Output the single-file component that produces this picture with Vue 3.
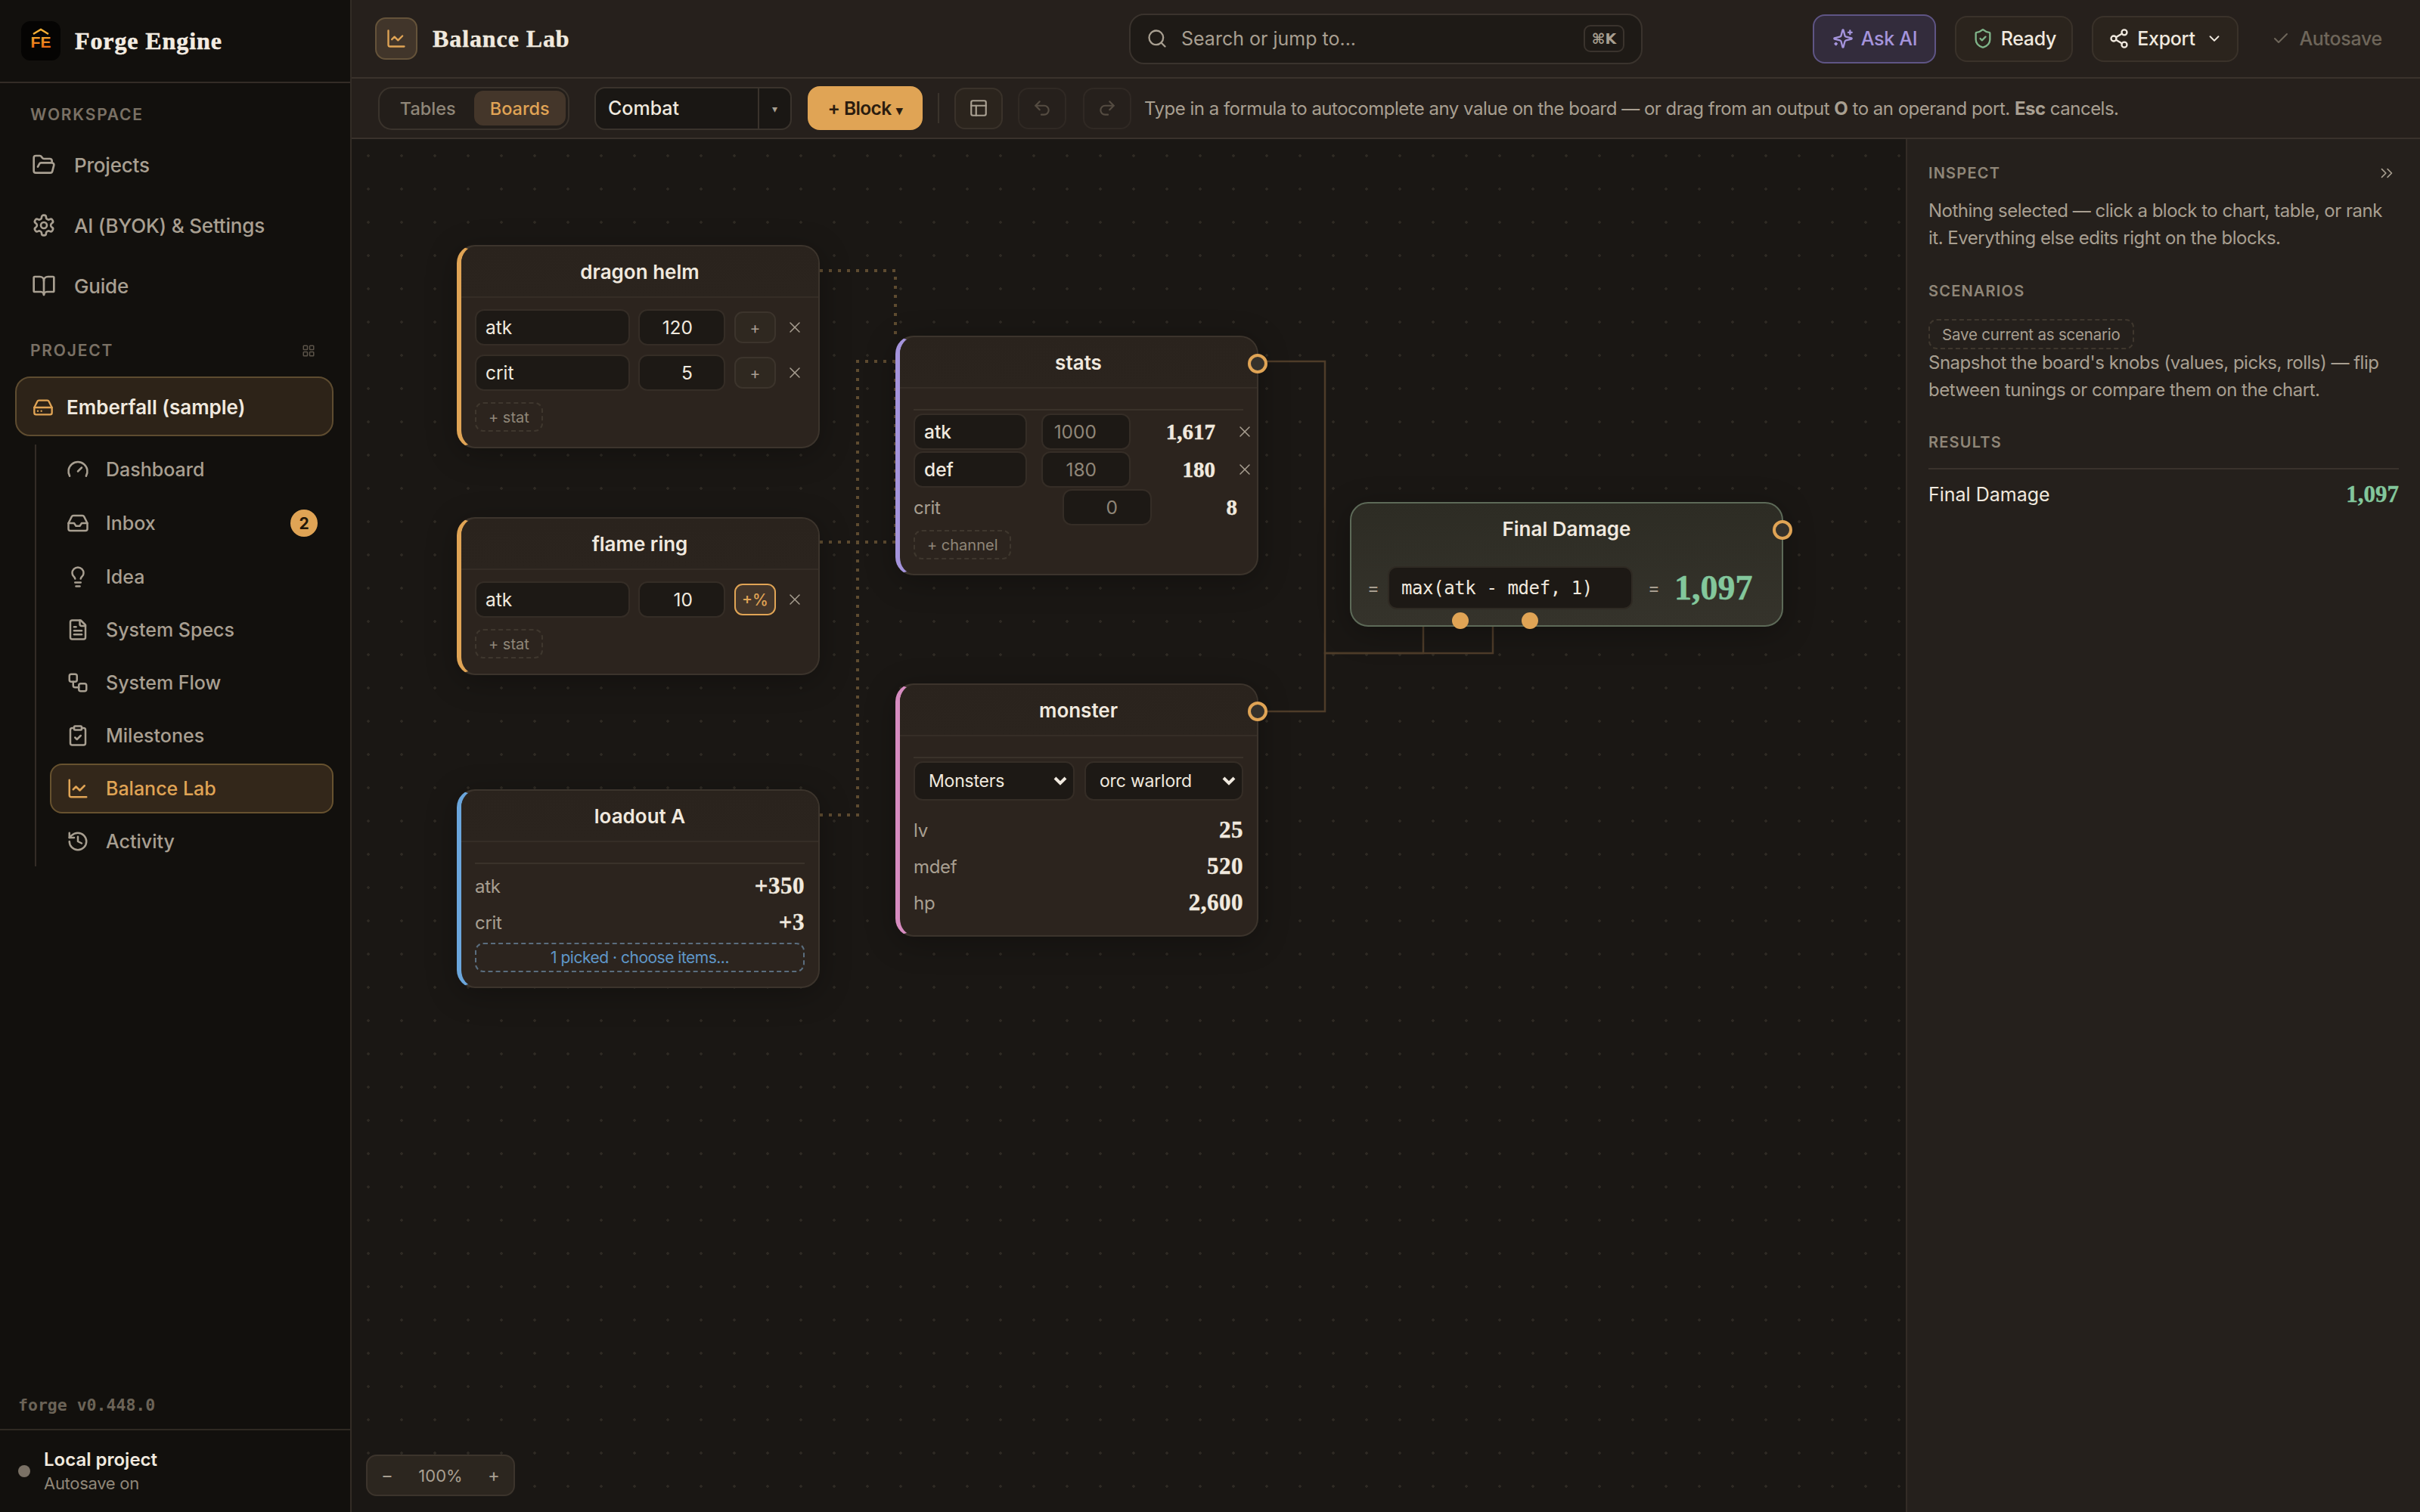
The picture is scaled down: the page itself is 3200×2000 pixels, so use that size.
<script setup>
import { h } from 'vue'

const paths = {
  folder: ['m6 14 1.5-2.9A2 2 0 0 1 9.24 10H20a2 2 0 0 1 1.94 2.5l-1.54 6a2 2 0 0 1-1.95 1.5H4a2 2 0 0 1-2-2V5a2 2 0 0 1 2-2h3.9a2 2 0 0 1 1.69.9l.81 1.2a2 2 0 0 0 1.67.9H18a2 2 0 0 1 2 2v2'],
  settings: ['M12.22 2h-.44a2 2 0 0 0-2 2v.18a2 2 0 0 1-1 1.73l-.43.25a2 2 0 0 1-2 0l-.15-.08a2 2 0 0 0-2.73.73l-.22.38a2 2 0 0 0 .73 2.73l.15.1a2 2 0 0 1 1 1.72v.51a2 2 0 0 1-1 1.74l-.15.09a2 2 0 0 0-.73 2.73l.22.38a2 2 0 0 0 2.73.73l.15-.08a2 2 0 0 1 2 0l.43.25a2 2 0 0 1 1 1.73V20a2 2 0 0 0 2 2h.44a2 2 0 0 0 2-2v-.18a2 2 0 0 1 1-1.73l.43-.25a2 2 0 0 1 2 0l.15.08a2 2 0 0 0 2.73-.73l.22-.39a2 2 0 0 0-.73-2.73l-.15-.08a2 2 0 0 1-1-1.74v-.5a2 2 0 0 1 1-1.74l.15-.09a2 2 0 0 0 .73-2.73l-.22-.38a2 2 0 0 0-2.73-.73l-.15.08a2 2 0 0 1-2 0l-.43-.25a2 2 0 0 1-1-1.73V4a2 2 0 0 0-2-2z', 'M15 12a3 3 0 1 1-6 0 3 3 0 0 1 6 0z'],
  book: ['M12 7v14', 'M3 18a1 1 0 0 1-1-1V4a1 1 0 0 1 1-1h5a4 4 0 0 1 4 4 4 4 0 0 1 4-4h5a1 1 0 0 1 1 1v13a1 1 0 0 1-1 1h-6a3 3 0 0 0-3 3 3 3 0 0 0-3-3z'],
  grid: ['M4 3h5a1 1 0 0 1 1 1v5a1 1 0 0 1-1 1H4a1 1 0 0 1-1-1V4a1 1 0 0 1 1-1z', 'M15 3h5a1 1 0 0 1 1 1v5a1 1 0 0 1-1 1h-5a1 1 0 0 1-1-1V4a1 1 0 0 1 1-1z', 'M4 14h5a1 1 0 0 1 1 1v5a1 1 0 0 1-1 1H4a1 1 0 0 1-1-1v-5a1 1 0 0 1 1-1z', 'M15 14h5a1 1 0 0 1 1 1v5a1 1 0 0 1-1 1h-5a1 1 0 0 1-1-1v-5a1 1 0 0 1 1-1z'],
  drive: ['M22 12H2', 'M5.45 5.11 2 12v6a2 2 0 0 0 2 2h16a2 2 0 0 0 2-2v-6l-3.45-6.89A2 2 0 0 0 16.76 4H7.24a2 2 0 0 0-1.79 1.11z', 'M6 16h.01', 'M10 16h.01'],
  gauge: ['m12 14 4-4', 'M3.34 19a10 10 0 1 1 17.32 0'],
  inbox: ['M22 12h-6l-2 3h-4l-2-3H2', 'M5.45 5.11 2 12v6a2 2 0 0 0 2 2h16a2 2 0 0 0 2-2v-6l-3.45-6.89A2 2 0 0 0 16.76 4H7.24a2 2 0 0 0-1.79 1.11z'],
  bulb: ['M15 14c.2-1 .7-1.7 1.5-2.5 1-.9 1.5-2.2 1.5-3.5A6 6 0 0 0 6 8c0 1 .2 2.2 1.5 3.5.7.7 1.3 1.5 1.5 2.5', 'M9 18h6', 'M10 22h4'],
  file: ['M15 2H6a2 2 0 0 0-2 2v16a2 2 0 0 0 2 2h12a2 2 0 0 0 2-2V7Z', 'M14 2v4a2 2 0 0 0 2 2h4', 'M10 9H8', 'M16 13H8', 'M16 17H8'],
  flow: ['M5 3h4a2 2 0 0 1 2 2v4a2 2 0 0 1-2 2H5a2 2 0 0 1-2-2V5a2 2 0 0 1 2-2z', 'M7 11v4a2 2 0 0 0 2 2h4', 'M15 13h4a2 2 0 0 1 2 2v4a2 2 0 0 1-2 2h-4a2 2 0 0 1-2-2v-4a2 2 0 0 1 2-2z'],
  clipboard: ['M9 2h6a1 1 0 0 1 1 1v2a1 1 0 0 1-1 1H9a1 1 0 0 1-1-1V3a1 1 0 0 1 1-1z', 'M16 4h2a2 2 0 0 1 2 2v14a2 2 0 0 1-2 2H6a2 2 0 0 1-2-2V6a2 2 0 0 1 2-2h2', 'm9 14 2 2 4-4'],
  chart: ['M3 3v16a2 2 0 0 0 2 2h16', 'm19 9-5 5-4-4-3 3'],
  history: ['M3 12a9 9 0 1 0 9-9 9.75 9.75 0 0 0-6.74 2.74L3 8', 'M3 3v5h5', 'M12 7v5l4 2'],
  search: ['M19 11a8 8 0 1 1-16 0 8 8 0 0 1 16 0z', 'm21 21-4.3-4.3'],
  sparkles: ['M9.937 15.5A2 2 0 0 0 8.5 14.063l-6.135-1.582a.5.5 0 0 1 0-.962L8.5 9.936A2 2 0 0 0 9.937 8.5l1.582-6.135a.5.5 0 0 1 .963 0L14.063 8.5A2 2 0 0 0 15.5 9.937l6.135 1.581a.5.5 0 0 1 0 .964L15.5 14.063a2 2 0 0 0-1.437 1.437l-1.582 6.135a.5.5 0 0 1-.963 0z', 'M20 3v4', 'M22 5h-4', 'M4 17v2', 'M5 18H3'],
  shield: ['M20 13c0 5-3.5 7.5-7.66 8.95a1 1 0 0 1-.67-.01C7.5 20.5 4 18 4 13V6a1 1 0 0 1 1-1c2 0 4.5-1.2 6.24-2.72a1.17 1.17 0 0 1 1.52 0C14.51 3.81 17 5 19 5a1 1 0 0 1 1 1z', 'm9 12 2 2 4-4'],
  share: ['M21 5a3 3 0 1 1-6 0 3 3 0 0 1 6 0z', 'M9 12a3 3 0 1 1-6 0 3 3 0 0 1 6 0z', 'M21 19a3 3 0 1 1-6 0 3 3 0 0 1 6 0z', 'm8.59 13.51 6.83 3.98', 'm15.41 6.51-6.82 3.98'],
  down: ['m6 9 6 6 6-6'],
  check: ['M20 6 9 17l-5-5'],
  panels: ['M5 3h14a2 2 0 0 1 2 2v14a2 2 0 0 1-2 2H5a2 2 0 0 1-2-2V5a2 2 0 0 1 2-2z', 'M3 9h18', 'M9 21V9'],
  undo: ['M9 14 4 9l5-5', 'M4 9h10.5a5.5 5.5 0 0 1 0 11H11'],
  redo: ['m15 14 5-5-5-5', 'M20 9H9.5a5.5 5.5 0 0 0 0 11H13'],
  x: ['M18 6 6 18', 'm6 6 12 12'],
  chevrons: ['m6 17 5-5-5-5', 'm13 17 5-5-5-5'],
}

const Icon = (props) =>
  h('svg', { viewBox: '0 0 24 24', fill: 'none', stroke: 'currentColor', 'stroke-width': props.sw || 2, 'stroke-linecap': 'round', 'stroke-linejoin': 'round' },
    paths[props.name].map((d) => h('path', { d })))
Icon.props = ['name', 'sw']

const workspace = [
  { label: 'Projects', icon: 'folder' },
  { label: 'AI (BYOK) & Settings', icon: 'settings' },
  { label: 'Guide', icon: 'book' },
]

const projectNav = [
  { label: 'Dashboard', icon: 'gauge' },
  { label: 'Inbox', icon: 'inbox', badge: 2 },
  { label: 'Idea', icon: 'bulb' },
  { label: 'System Specs', icon: 'file' },
  { label: 'System Flow', icon: 'flow' },
  { label: 'Milestones', icon: 'clipboard' },
  { label: 'Balance Lab', icon: 'chart', active: true },
  { label: 'Activity', icon: 'history' },
]
</script>

<template>
  <div class="app">
    <aside class="sidebar">
      <div class="brand">
        <div class="logo">
          <svg viewBox="0 0 52 52">
            <defs>
              <linearGradient id="fe" x1="0" y1="0" x2="0" y2="1">
                <stop offset="0" stop-color="#f7b733" />
                <stop offset="1" stop-color="#e8590c" />
              </linearGradient>
            </defs>
            <path d="M16 17 26 11l10 6" fill="none" stroke="#f5b035" stroke-width="2.4" />
            <text x="26" y="35" text-anchor="middle" class="logo-text" fill="url(#fe)">FE</text>
          </svg>
        </div>
        <span class="brand-name">Forge Engine</span>
      </div>

      <div class="nav-wrap">
        <div class="nav-label">WORKSPACE</div>
        <a v-for="item in workspace" :key="item.label" class="nav-item">
          <Icon :name="item.icon" class="nav-icon" />
          <span>{{ item.label }}</span>
        </a>

        <div class="nav-label project-label">
          <span>PROJECT</span>
          <Icon name="grid" class="grid-icon" />
        </div>
        <div class="project-btn">
          <Icon name="drive" class="project-icon" />
          <span>Emberfall (sample)</span>
        </div>

        <div class="sub-list">
          <a v-for="item in projectNav" :key="item.label" class="sub-item"
            :class="{ active: item.active, tall: item.badge }">
            <Icon :name="item.icon" class="sub-icon" />
            <span>{{ item.label }}</span>
            <span v-if="item.badge" class="badge">{{ item.badge }}</span>
          </a>
        </div>
      </div>

      <div class="version">forge v0.448.0</div>
      <div class="side-foot">
        <span class="foot-dot"></span>
        <div>
          <div class="foot-title">Local project</div>
          <div class="foot-sub">Autosave on</div>
        </div>
      </div>
    </aside>

    <main class="main">
      <header class="topbar">
        <div class="page-title">
          <div class="page-icon"><Icon name="chart" /></div>
          <h1>Balance Lab</h1>
        </div>
        <div class="search">
          <Icon name="search" class="search-icon" />
          <span class="search-text">Search or jump to...</span>
          <kbd>⌘K</kbd>
        </div>
        <div class="top-actions">
          <button class="top-btn ai"><Icon name="sparkles" />Ask AI</button>
          <button class="top-btn ready"><Icon name="shield" class="green" />Ready</button>
          <button class="top-btn export"><Icon name="share" />Export<Icon name="down" class="small" /></button>
          <button class="autosave"><Icon name="check" />Autosave</button>
        </div>
      </header>

      <div class="toolbar">
        <div class="segment">
          <button>Tables</button>
          <button class="on">Boards</button>
        </div>
        <div class="sheet-select">
          <span class="sheet-name">Combat</span>
          <span class="sheet-caret">▾</span>
        </div>
        <button class="add-block">+ Block <span class="tiny">▾</span></button>
        <span class="tool-sep"></span>
        <button class="tool-btn lit"><Icon name="panels" /></button>
        <button class="tool-btn off"><Icon name="undo" /></button>
        <button class="tool-btn off"><Icon name="redo" /></button>
        <p class="hint">Type in a formula to autocomplete any value on the board — or drag from an output <b>O</b> to an operand port. <b>Esc</b> cancels.</p>
      </div>

      <div class="work">
        <section class="canvas">
          <svg class="wires" viewBox="465 184 2055 1816">
            <g class="dotted">
              <path d="M1084 358H1184V444" />
              <path d="M1084 717H1184V478" />
              <path d="M1084 1078H1134V478H1184" />
            </g>
            <g class="solid">
              <path d="M1664 478H1752V864H1882V829" />
              <path d="M1664 941H1752V864H1974V829" />
            </g>
          </svg>

          <div class="node amber helm">
            <div class="node-head">dragon helm</div>
            <div class="node-body">
              <div class="stat-row">
                <input class="fld name" value="atk" />
                <input class="fld num" value="120" />
                <button class="mode">+</button>
                <Icon name="x" class="del" sw="1.5" />
              </div>
              <div class="stat-row">
                <input class="fld name" value="crit" />
                <input class="fld num" value="5" />
                <button class="mode">+</button>
                <Icon name="x" class="del" sw="1.5" />
              </div>
              <button class="dash-btn">+ stat</button>
            </div>
          </div>

          <div class="node amber ring">
            <div class="node-head">flame ring</div>
            <div class="node-body">
              <div class="stat-row">
                <input class="fld name" value="atk" />
                <input class="fld num" value="10" />
                <button class="mode pct">+%</button>
                <Icon name="x" class="del" sw="1.5" />
              </div>
              <button class="dash-btn">+ stat</button>
            </div>
          </div>

          <div class="node blue loadout">
            <div class="node-head">loadout A</div>
            <div class="node-body ruled">
              <div class="rule"></div>
              <div class="read"><span>atk</span><b>+350</b></div>
              <div class="read"><span>crit</span><b>+3</b></div>
              <button class="pick">1 picked · choose items...</button>
            </div>
          </div>

          <div class="node violet stats">
            <div class="node-head">stats</div>
            <span class="port out"></span>
            <div class="node-body ruled">
              <div class="rule"></div>
              <div class="chan">
                <input class="fld chan-name" value="atk" />
                <input class="fld num base" value="1000" />
                <b class="chan-val">1,617</b>
                <Icon name="x" class="del chan-del" sw="1.5" />
              </div>
              <div class="chan">
                <input class="fld chan-name" value="def" />
                <input class="fld num base" value="180" />
                <b class="chan-val">180</b>
                <Icon name="x" class="del chan-del" sw="1.5" />
              </div>
              <div class="chan plain">
                <span class="chan-label">crit</span>
                <input class="fld num base" value="0" />
                <b class="chan-val last">8</b>
              </div>
              <button class="dash-btn chan-add">+ channel</button>
            </div>
          </div>

          <div class="node pink monster">
            <div class="node-head">monster</div>
            <span class="port out"></span>
            <div class="node-body ruled">
              <div class="rule"></div>
              <div class="selects">
                <select class="pick-a"><option>Monsters</option></select>
                <select class="pick-b"><option>orc warlord</option></select>
              </div>
              <div class="reads">
                <div class="read"><span>lv</span><b>25</b></div>
                <div class="read"><span>mdef</span><b>520</b></div>
                <div class="read"><span>hp</span><b>2,600</b></div>
              </div>
            </div>
          </div>

          <div class="node result">
            <div class="node-head">Final Damage</div>
            <span class="port out"></span>
            <div class="formula-row">
              <span class="eq">=</span>
              <input class="formula" value="max(atk - mdef, 1)" />
              <span class="eq">=</span>
              <b class="result-val">1,097</b>
            </div>
            <span class="port operand first"></span>
            <span class="port operand second"></span>
          </div>

          <div class="zoombar">
            <button>−</button>
            <span>100%</span>
            <button>+</button>
          </div>
        </section>

        <aside class="inspector">
          <div class="ins-head">
            <h3>INSPECT</h3>
            <Icon name="chevrons" class="collapse" sw="1.5" />
          </div>
          <p>Nothing selected — click a block to chart, table, or rank it. Everything else edits right on the blocks.</p>
          <h3 class="sec">SCENARIOS</h3>
          <button class="save-btn">Save current as scenario</button>
          <p>Snapshot the board's knobs (values, picks, rolls) — flip between tunings or compare them on the chart.</p>
          <h3 class="sec results">RESULTS</h3>
          <div class="result-row">
            <span>Final Damage</span>
            <b>1,097</b>
          </div>
        </aside>
      </div>
    </main>
  </div>
</template>

<style>
html, body {
  margin: 0;
  background: #1a1714;
}
</style>

<style scoped>
.app {
  display: flex;
  width: 3200px;
  height: 2000px;
  overflow: hidden;
  font-family: Inter, "Noto Sans", sans-serif;
  color: #f0e9df;
  color-scheme: dark;
}
button, input, select {
  font-family: inherit;
  color: inherit;
  box-sizing: border-box;
  margin: 0;
}
svg { display: block; flex: none; }

/* sidebar */
.sidebar {
  width: 465px;
  flex: none;
  box-sizing: border-box;
  display: flex;
  flex-direction: column;
  background: #12100d;
  border-right: 2px solid #332c26;
}
.brand {
  height: 110px;
  box-sizing: border-box;
  display: flex;
  align-items: center;
  gap: 19px;
  padding-left: 28px;
  border-bottom: 2px solid #332c26;
}
.logo {
  width: 52px;
  height: 52px;
  background: #050403;
  border-radius: 12px;
}
.logo-text {
  font: 700 21px "Liberation Sans", sans-serif;
}
.brand-name {
  font: 700 32px "Liberation Serif", serif;
  letter-spacing: 0.9px;
  -webkit-text-stroke: 0.5px currentColor;
  color: #f3ece2;
}
.nav-wrap {
  flex: 1;
  padding-top: 28px;
}
.nav-label {
  height: 28px;
  line-height: 28px;
  padding-left: 40px;
  font-size: 21px;
  font-weight: 600;
  letter-spacing: 1.8px;
  color: #7a7165;
  margin-bottom: 12px;
}
.nav-item {
  height: 80px;
  display: flex;
  align-items: center;
  gap: 24px;
  padding-left: 42px;
  font-size: 26px;
  letter-spacing: -0.2px;
  font-weight: 500;
  color: #a89f91;
}
.nav-icon { width: 32px; height: 32px; }
.project-label {
  display: flex;
  align-items: center;
  justify-content: space-between;
  margin: 32px 46px 20px 0;
}
.grid-icon { width: 18px; height: 18px; color: #5b5349; }
.project-btn {
  height: 79px;
  box-sizing: border-box;
  margin: 0 22px 0 20px;
  display: flex;
  align-items: center;
  gap: 17px;
  padding: 2px 0 0 21px;
  background: #2d2318;
  border: 2px solid #5e4c30;
  border-radius: 20px;
  font-size: 26px;
  font-weight: 600;
}
.project-icon { width: 28px; height: 28px; color: #e0a455; }
.sub-list {
  margin: 11px 22px 0 46px;
  padding-left: 18px;
  border-left: 2px solid #332c26;
  display: flex;
  flex-direction: column;
  gap: 4px;
}
.sub-item {
  height: 66px;
  box-sizing: border-box;
  display: flex;
  align-items: center;
  gap: 22px;
  padding-left: 22px;
  font-size: 25px;
  font-weight: 500;
  color: #a89f91;
  border: 2px solid transparent;
  border-radius: 16px;
}
.sub-item.tall { height: 68px; }
.sub-item.active {
  color: #e0a455;
  background: #33271a;
  border-color: #67522f;
}
.sub-icon { width: 30px; height: 30px; margin-left: -2px; }
.badge {
  width: 36px;
  height: 36px;
  margin: 0 19px 0 auto;
  border-radius: 50%;
  background: #e0a455;
  color: #221708;
  font-size: 21px;
  font-weight: 700;
  display: flex;
  align-items: center;
  justify-content: center;
}
.version {
  padding: 0 24px;
  margin-bottom: 19px;
  font: 700 21.5px "DejaVu Sans Mono", monospace;
  color: #6b6357;
}
.side-foot {
  height: 110px;
  box-sizing: border-box;
  border-top: 2px solid #2f2922;
  display: flex;
  align-items: center;
  gap: 18px;
  padding-left: 24px;
}
.foot-dot {
  width: 16px;
  height: 16px;
  border-radius: 50%;
  background: #7a7165;
}
.foot-title {
  font-size: 24px;
  font-weight: 600;
  line-height: 32px;
}
.foot-sub {
  font-size: 22px;
  letter-spacing: -0.3px;
  line-height: 30px;
  color: #8f8678;
}

/* top of main */
.main {
  flex: 1;
  min-width: 0;
  display: flex;
  flex-direction: column;
}
.topbar {
  height: 104px;
  box-sizing: border-box;
  flex: none;
  display: grid;
  grid-template-columns: 1fr 679px 1fr;
  align-items: center;
  background: #26201c;
  border-bottom: 2px solid #3a322c;
}
.page-title {
  display: flex;
  align-items: center;
  gap: 20px;
  padding-left: 31px;
}
.page-icon {
  width: 56px;
  height: 56px;
  box-sizing: border-box;
  padding: 12px;
  border-radius: 14px;
  background: #41352a;
  border: 2px solid #65533a;
  color: #e0a455;
}
h1 {
  margin: 0;
  font: 700 32px "Liberation Serif", serif;
  letter-spacing: 0.9px;
  -webkit-text-stroke: 0.4px currentColor;
  color: #f0e9df;
}
.search {
  height: 67px;
  box-sizing: border-box;
  display: flex;
  align-items: center;
  padding: 0 22px 0 21px;
  background: #1e1a16;
  border: 2px solid #3a332d;
  border-radius: 20px;
  color: #a89f91;
}
.search-icon { width: 28px; height: 28px; }
.search-text {
  margin-left: 18px;
  font-size: 25px;
  flex: 1;
}
kbd {
  width: 54px;
  height: 36px;
  box-sizing: border-box;
  border: 2px solid #3a332d;
  border-radius: 9px;
  font: 700 19px "DejaVu Sans", sans-serif;
  display: flex;
  align-items: center;
  justify-content: center;
}
.top-actions {
  display: flex;
  align-items: center;
  justify-content: flex-end;
  padding-right: 32px;
  gap: 25px;
}
.top-btn {
  height: 61px;
  padding: 0;
  display: flex;
  align-items: center;
  justify-content: center;
  gap: 10px;
  background: #2b241d;
  border: 2px solid #3a322a;
  border-radius: 16px;
  font-size: 25px;
  letter-spacing: -0.3px;
  font-weight: 500;
}
.top-btn svg { width: 28px; height: 28px; }
.top-btn svg.green { color: #7fb489; }
.top-btn svg.small { width: 22px; height: 22px; margin-left: 4px; }
.top-btn.ai {
  width: 163px;
  height: 65px;
  background: #332c3c;
  border-color: #5f5585;
  color: #a594dc;
}
.top-btn.ready { width: 156px; }
.top-btn.export { width: 194px; }
.autosave {
  display: flex;
  align-items: center;
  gap: 12px;
  padding: 0 18px 0 20px;
  margin-left: -1px;
  background: none;
  border: 0;
  font-size: 25px;
  letter-spacing: -0.3px;
  font-weight: 500;
  color: #6e665a;
}
.autosave svg { width: 24px; height: 24px; }

/* toolbar */
.toolbar {
  height: 80px;
  box-sizing: border-box;
  flex: none;
  display: flex;
  align-items: center;
  padding-left: 35px;
  background: #26201c;
  border-bottom: 2px solid #3a322c;
}
.segment {
  width: 253px;
  height: 57px;
  box-sizing: border-box;
  display: flex;
  align-items: center;
  padding: 0 3px;
  background: #231e1a;
  border: 2px solid #3a332c;
  border-radius: 18px;
}
.segment button {
  flex: 1;
  height: 46px;
  background: none;
  border: 0;
  border-radius: 12px;
  font-size: 23.5px;
  font-weight: 500;
  color: #8f8678;
}
.segment .on { background: #44362a; color: #e0a455; }
.sheet-select {
  width: 261px;
  height: 57px;
  box-sizing: border-box;
  margin-left: 33px;
  display: flex;
  align-items: center;
  background: #1a1714;
  border: 2px solid #3a332c;
  border-radius: 14px;
}
.sheet-name {
  flex: 1;
  height: 100%;
  box-sizing: border-box;
  padding-left: 16px;
  line-height: 53px;
  font-size: 25px;
  font-weight: 500;
  border-right: 2px solid #3a332c;
}
.sheet-caret {
  width: 41px;
  text-align: center;
  font-size: 14px;
  color: #a89f91;
}
.add-block {
  width: 152px;
  height: 58px;
  margin-left: 21px;
  padding: 0;
  background: #e0a455;
  border: 0;
  border-radius: 16px;
  font-size: 24.5px;
  letter-spacing: -0.6px;
  font-weight: 600;
  color: #2a1c0f;
}
.tiny { font-size: 17px; margin-left: 1px; }
.tool-sep {
  width: 2px;
  height: 40px;
  margin: 0 20px;
  background: #3a332c;
}
.tool-btn {
  width: 64px;
  height: 55px;
  padding: 0;
  display: flex;
  align-items: center;
  justify-content: center;
  background: #2b241d;
  border: 2px solid #3a322a;
  border-radius: 14px;
  color: #a89f91;
}
.tool-btn svg { width: 26px; height: 26px; }
.tool-btn.off {
  margin-left: 20px;
  background: none;
  border-color: #302924;
  color: #554c42;
}
.tool-btn.off + .tool-btn.off { margin-left: 22px; }
.hint {
  margin: 0 0 0 17px;
  font-size: 24px;
  letter-spacing: -0.5px;
  color: #a89f91;
  white-space: nowrap;
}
.hint b { font-weight: 700; }

/* canvas */
.work {
  flex: 1;
  min-height: 0;
  display: flex;
}
.canvas {
  flex: 1;
  min-width: 0;
  position: relative;
  background-color: #1a1714;
  background-image: radial-gradient(circle, #2f2a24 1.5px, transparent 2px);
  background-size: 44px 44px;
}
.wires {
  position: absolute;
  left: 0;
  top: 0;
  width: 2055px;
  height: 1816px;
  fill: none;
}
.dotted path {
  stroke: #5e4b30;
  stroke-width: 4;
  stroke-dasharray: 4 8;
}
.solid path {
  stroke: #4e3c29;
  stroke-width: 2.5;
}

.node {
  position: absolute;
  width: 480px;
  box-sizing: border-box;
  background: #2c241e;
  border: 2px solid #3c342c;
  border-left-width: 6px;
  border-radius: 24px;
  box-shadow: 0 8px 40px rgba(0, 0, 0, 0.28);
}
.amber { border-left-color: #e0a455; }
.blue { border-left-color: #6ba6dc; }
.violet { border-left-color: #a594dc; }
.pink { border-left-color: #d78cc0; }
.helm { left: 139px; top: 140px; }
.ring { left: 139px; top: 500px; }
.loadout { left: 139px; top: 860px; }
.stats { left: 719px; top: 260px; }
.monster { left: 719px; top: 720px; }

.node-head {
  height: 68px;
  box-sizing: border-box;
  display: flex;
  align-items: center;
  justify-content: center;
  font-size: 26px;
  font-weight: 600;
  border-bottom: 2px solid #352d26;
  background: linear-gradient(#2a231d, #2b241e);
  border-radius: 22px 22px 0 0;
}
.node-body { padding: 15px 18px 20px; }
.node-body.ruled { padding: 27px 18px 19px; }
.rule {
  height: 2px;
  background: #3a322a;
}
.stat-row {
  display: flex;
  align-items: center;
  height: 48px;
  margin-bottom: 12px;
}
.fld {
  height: 48px;
  flex: none;
  background: #1d1915;
  border: 2px solid #352d26;
  border-radius: 12px;
  font-size: 24.5px;
  outline: none;
}
.name {
  width: 205px;
  padding: 0 12px;
}
.num {
  width: 115px;
  margin-left: 11px;
  padding: 0 41px 0 8px;
  text-align: right;
}
.mode {
  width: 55px;
  height: 42px;
  margin-left: 12px;
  padding: 0;
  background: #2f2820;
  border: 2px solid #3c342c;
  border-radius: 11px;
  font-size: 21px;
  color: #a89f91;
}
.mode.pct {
  background: #44362a;
  border-color: #e0a455;
  color: #e0a455;
  font-weight: 500;
}
.del {
  width: 24px;
  height: 24px;
  margin-left: 13px;
  color: #a89f91;
}
.dash-btn {
  display: block;
  height: 39px;
  padding: 0 16px;
  margin-top: 15px;
  background: none;
  border: 2px dashed #3f372e;
  border-radius: 11px;
  font-size: 20px;
  color: #8f8678;
}

.read {
  display: flex;
  justify-content: space-between;
  align-items: center;
  height: 48px;
  font-size: 24px;
  letter-spacing: -0.3px;
  color: #a89f91;
}
.read b {
  font: 700 31px "Liberation Serif", serif;
  letter-spacing: 0.5px;
  -webkit-text-stroke: 0.4px currentColor;
  color: #f0e9df;
}
.chan-val {
  flex: none;
  width: 112px;
  text-align: right;
  font: 700 29px "Liberation Serif", serif;
  -webkit-text-stroke: 0.4px currentColor;
  color: #f0e9df;
}
.loadout .rule { margin-bottom: 5px; }
.pick {
  display: block;
  width: 100%;
  height: 39px;
  margin-top: 3px;
  padding: 0;
  background: none;
  border: 2px dashed #5a6d7e;
  border-radius: 11px;
  font-size: 21px;
  letter-spacing: -0.5px;
  color: #5f97c8;
}

.chan {
  display: flex;
  align-items: center;
  height: 48px;
  margin-top: 2px;
}
.stats .rule { margin-bottom: 4px; }
.stats .rule + .chan { margin-top: 0; }
.chan-name {
  width: 150px;
  padding: 0 12px;
  font-weight: 500;
}
.base {
  width: 118px;
  margin-left: 19px;
  padding-right: 43px;
  color: #8f8678;
}
.chan-del { margin-left: 27px; }
.plain .chan-label {
  width: 197px;
  flex: none;
  font-size: 24px;
  letter-spacing: -0.3px;
  color: #a89f91;
}
.plain .base { margin-left: 0; }
.plain .chan-val.last { flex: 1; padding-right: 8px; }
.chan-add { margin-top: 6px; }

.selects {
  display: flex;
  justify-content: space-between;
  margin-top: 4px;
}
.selects select {
  height: 52px;
  padding: 0 0 0 18px;
  appearance: none;
  background: #1d1915 url("data:image/svg+xml,%3Csvg xmlns='http://www.w3.org/2000/svg' width='18' height='12'%3E%3Cpath d='M2 2l7 7 7-7' fill='none' stroke='%23f0e9df' stroke-width='4'/%3E%3C/svg%3E") no-repeat right 8px center;
  border: 2px solid #352d26;
  border-radius: 12px;
  font-size: 23px;
  letter-spacing: -0.2px;
}
.pick-a { width: 213px; }
.pick-b { width: 210px; }
.reads { margin-top: 15px; }

.port {
  position: absolute;
  box-sizing: border-box;
  border-radius: 50%;
}
.port.out {
  width: 26px;
  height: 26px;
  right: -14px;
  top: 22px;
  background: #35312b;
  border: 4px solid #e0a455;
}
.port.operand {
  width: 22px;
  height: 22px;
  top: 144px;
  background: #e0a455;
}
.operand.first { left: 133px; }
.operand.second { left: 225px; }

.result {
  left: 1320px;
  top: 480px;
  width: 573px;
  height: 165px;
  border: 2px solid #5d6a58;
  background: linear-gradient(#2d2c24, #35332b);
}
.result .node-head {
  height: 66px;
  background: none;
  border: 0;
}
.formula-row {
  display: flex;
  align-items: center;
  margin-top: 17px;
  padding-left: 21px;
}
.eq {
  width: 14px;
  font-size: 24px;
  color: #a89f91;
}
.formula {
  width: 324px;
  height: 57px;
  margin: 0 20px 0 13px;
  padding: 0 16px;
  background: #1d1915;
  border: 2px solid #2f2a23;
  border-radius: 12px;
  font: 24px "DejaVu Sans Mono", monospace;
  letter-spacing: -0.4px;
  outline: none;
}
.result-val {
  margin-left: 21px;
  font: 700 46px "Liberation Serif", serif;
  -webkit-text-stroke: 0.5px currentColor;
  color: #83c79c;
}

.zoombar {
  position: absolute;
  left: 19px;
  bottom: 21px;
  width: 197px;
  height: 55px;
  box-sizing: border-box;
  display: flex;
  align-items: center;
  justify-content: space-between;
  padding: 0 14px;
  background: #2c261f;
  border: 2px solid #3c342c;
  border-radius: 14px;
  font-size: 22px;
  color: #a89f91;
}
.zoombar button {
  background: none;
  border: 0;
  padding: 0 4px;
  font-size: 24px;
}

/* inspector */
.inspector {
  width: 680px;
  flex: none;
  box-sizing: border-box;
  padding: 30px 28px 0 28px;
  background: #25201c;
  border-left: 2px solid #332c26;
}
h3 {
  margin: 0;
  font-size: 20px;
  font-weight: 600;
  letter-spacing: 1.2px;
  line-height: 30px;
  color: #8f8678;
}
.ins-head {
  display: flex;
  justify-content: space-between;
  align-items: center;
}
.collapse {
  width: 26px;
  height: 26px;
  color: #a89f91;
  margin-right: 3px;
}
.inspector p {
  margin: 17px 0 0;
  font-size: 24px;
  letter-spacing: -0.5px;
  line-height: 36px;
  color: #a89f91;
}
.sec { margin-top: 37px; }
.save-btn {
  display: block;
  height: 40px;
  margin-top: 22px;
  padding: 0 16px;
  background: none;
  border: 2px dashed #3f372e;
  border-radius: 11px;
  font-size: 20.5px;
  letter-spacing: -0.2px;
  color: #a89f91;
}
.inspector .save-btn + p { margin-top: 0; }
.results { margin-top: 36px; }
.result-row {
  margin-top: 19px;
  padding-top: 15px;
  border-top: 2px solid #3a322c;
  display: flex;
  justify-content: space-between;
  align-items: center;
  font-size: 25px;
}
.result-row b {
  font: 700 31px "Liberation Serif", serif;
  -webkit-text-stroke: 0.4px currentColor;
  color: #83c79c;
}
</style>
